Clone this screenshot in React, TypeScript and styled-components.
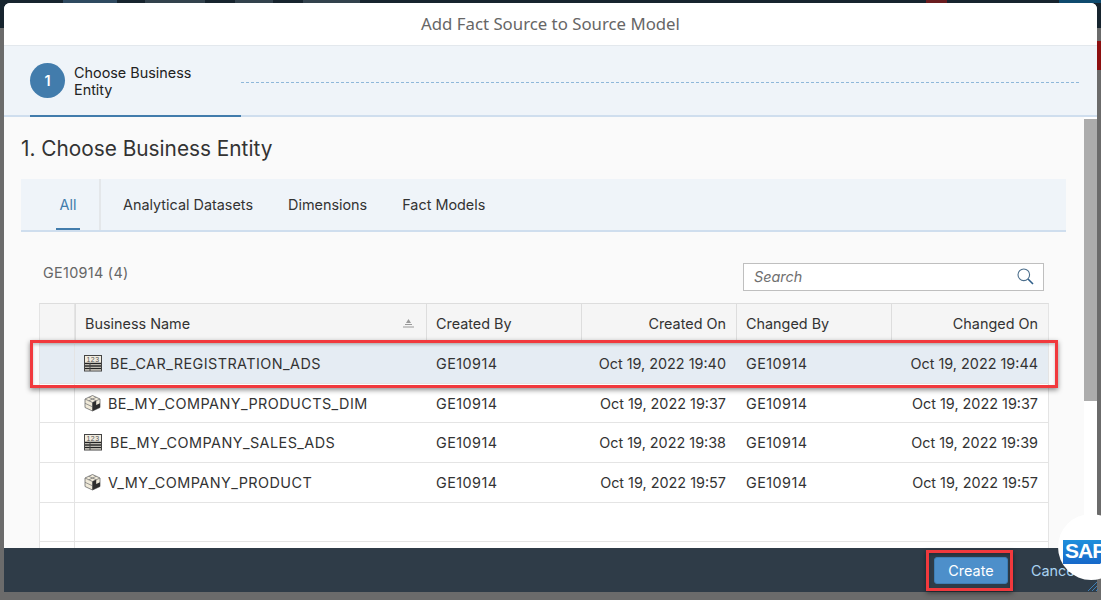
import styled, { createGlobalStyle } from 'styled-components';

const GlobalStyle = createGlobalStyle`
    html, body {
        margin: 0;
        padding: 0;
        height: 100%;
        overflow: hidden;
        font-family: Inter, "Noto Sans", sans-serif;
    }
`;

const Page = styled.div`
    position: relative;
    width: 1101px;
    height: 600px;
    overflow: hidden;
    background: #6b6b6b;
`;

const ShellBar = styled.div`
    height: 28px;
    display: flex;
    background: #17242e;
`;

const ShellMark = styled.div<{ $left: number; $width: number; $color: string }>`
    width: ${(p) => p.$width}px;
    height: 3px;
    margin-left: ${(p) => p.$left}px;
    background: ${(p) => p.$color};
`;

const RedFlag = styled.div`
    position: absolute;
    right: 0;
    top: 41px;
    width: 4px;
    height: 29px;
    background: #8c0f10;
`;

const Dialog = styled.div`
    position: absolute;
    left: 4px;
    top: 3px;
    width: 1093px;
    height: 589px;
    display: flex;
    flex-direction: column;
    background: #fafafa;
    border-radius: 6px 6px 0 0;
    overflow: hidden;
`;

const DialogTitle = styled.div`
    height: 43px;
    flex: none;
    background: #fff;
    color: #666;
    font-family: "Noto Sans", sans-serif;
    font-size: 16.8px;
    line-height: 42px;
    text-align: center;
    border-bottom: 1px solid #e3e8ed;
    box-sizing: border-box;
`;

const Wizard = styled.div`
    height: 71px;
    flex: none;
    box-sizing: border-box;
    display: flex;
    padding-left: 26px;
    background: #eff4f9;
    border-bottom: 2px solid #cfdeee;
`;

const WizardStep = styled.div`
    width: 211px;
    height: 71px;
    flex: none;
    box-sizing: border-box;
    display: flex;
    align-items: center;
    gap: 9px;
    padding-bottom: 1px;
    border-bottom: 2px solid #427cac;
`;

const StepBadge = styled.div`
    width: 35px;
    height: 35px;
    flex: none;
    border-radius: 50%;
    background: #427cac;
    color: #fff;
    font-size: 14.4px;
    font-weight: 600;
    line-height: 35px;
    text-align: center;
`;

const StepLabel = styled.div`
    width: 130px;
    padding-top: 2px;
    color: #222;
    font-size: 14.4px;
    line-height: 17px;
`;

const StepLine = styled.div`
    width: 838px;
    height: 0;
    margin-top: 36px;
    border-top: 1px dashed #8fb8da;
`;

const Body = styled.div`
    flex: 1;
    min-height: 0;
    display: flex;
    overflow: hidden;
`;

const Content = styled.div`
    flex: 1;
    min-width: 0;
    padding: 0 18px 0 17px;
    overflow: hidden;
`;

const ScrollTrack = styled.div`
    width: 13px;
    flex: none;
    background: #fff;
`;

const ScrollThumb = styled.div`
    height: 282px;
    margin-top: 2px;
    background: #acacac;
`;

const Heading = styled.h2`
    margin: 0;
    padding-top: 18px;
    height: 62px;
    box-sizing: border-box;
    color: #333;
    font-size: 20.8px;
    font-weight: 400;
    line-height: 27px;
`;

const TabBar = styled.div`
    height: 53px;
    box-sizing: border-box;
    display: flex;
    padding-left: 35px;
    background: #eff4f9;
    border-bottom: 2px solid #cfdeee;
`;

const Tab = styled.div<{ $active?: boolean }>`
    height: 51px;
    box-sizing: border-box;
    color: ${(p) => (p.$active ? '#427cac' : '#333')};
    font-size: 14.4px;
    line-height: 52px;
    white-space: nowrap;
    text-align: center;
    width: ${(p) => (p.$active ? '24px' : 'auto')};
    margin-right: ${(p) => (p.$active ? '19px' : '35px')};
    ${(p) => p.$active && 'border-bottom: 2px solid #427cac;'}
`;

const TabDivider = styled.div`
    width: 2px;
    height: 51px;
    margin-right: 22px;
    background: #e4e7ea;
`;

const Toolbar = styled.div`
    height: 72px;
    display: flex;
    align-items: flex-start;
    justify-content: space-between;
    padding: 31px 22px 0 22px;
    box-sizing: border-box;
`;

const Owner = styled.div`
    color: #666;
    font-size: 14.4px;
    letter-spacing: 0.3px;
    line-height: 20px;
`;

const SearchBox = styled.div`
    width: 301px;
    height: 28px;
    box-sizing: border-box;
    display: flex;
    align-items: center;
    justify-content: space-between;
    padding: 0 9px 1px 10px;
    background: #fff;
    border: 1px solid #bfbfbf;
    color: #707070;
    font-size: 14.4px;
    font-style: italic;
`;

const Table = styled.div`
    box-sizing: border-box;
    margin: -1px 0 0 18px;
    width: 1010px;
    border-top: 1px solid #ddd;
    border-right: 1px solid #e4e4e4;
    border-left: 1px solid #e4e4e4;
`;

const Row = styled.div<{ $head?: boolean; $selected?: boolean }>`
    display: grid;
    grid-template-columns: 35px 351px 155px 155px 155px 1fr;
    height: ${(p) => (p.$head ? '40px' : '39.7px')};
    box-sizing: border-box;
    align-items: stretch;
    border-bottom: 1px solid #e4e4e4;
    color: #333;
    font-size: 14.4px;
    background: ${(p) => (p.$selected ? '#e5ecf3' : p.$head ? '#f5f5f5' : '#fff')};
`;

const Cell = styled.div<{ $right?: boolean; $head?: boolean; $caps?: boolean }>`
    display: flex;
    align-items: center;
    justify-content: ${(p) => (p.$right ? 'flex-end' : 'flex-start')};
    padding: 0 ${(p) => (p.$right ? '10px' : '0')} 0 ${(p) => (p.$head ? '9px' : '10px')};
    border-left: ${(p) => (p.$head ? '1px solid #ddd' : 'none')};
    letter-spacing: ${(p) => (p.$caps ? '0.45px' : '0')};
    white-space: nowrap;
    min-width: 0;
    overflow: hidden;
`;

const SelectorCell = styled.div`
    border-right: 1px solid #e4e4e4;
`;

const NameCell = styled(Cell)`
    gap: 7px;
    padding-left: 9px;
`;

const SortMark = styled.svg`
    margin-left: auto;
    margin-right: 11px;
`;

const Footer = styled.div`
    height: 44px;
    flex: none;
    box-sizing: border-box;
    display: flex;
    align-items: center;
    padding-left: 930px;
    background: #2f3c48;
`;

const PrimaryButton = styled.button`
    width: 74px;
    height: 27px;
    flex: none;
    border: 1px solid #3f7fb5;
    border-radius: 3px;
    background: #4d8fca;
    color: #fff;
    font-family: inherit;
    font-size: 14.4px;
    padding: 0;
`;

const GhostButton = styled.button`
    flex: none;
    margin-left: 23px;
    border: none;
    background: none;
    color: #a9d2f0;
    font-family: inherit;
    font-size: 14.4px;
    padding: 0;
`;

const Callout = styled.div`
    position: absolute;
    box-sizing: border-box;
    border: 3px solid #f1393d;
    box-shadow: 0 2px 5px rgba(0, 0, 0, 0.45), inset 0 2px 3px rgba(0, 0, 0, 0.2);
`;

const RowCallout = styled(Callout)`
    left: 30px;
    top: 340px;
    width: 1028px;
    height: 48px;
`;

const ButtonCallout = styled(Callout)`
    left: 926px;
    top: 550px;
    width: 87px;
    height: 41px;
`;

const LogoBubble = styled.div`
    position: absolute;
    left: 1058px;
    top: 514px;
    width: 66px;
    height: 66px;
    box-sizing: border-box;
    padding: 26px 0 0 5px;
    border-radius: 50%;
    background: #fff;
`;

const Grip = styled.svg`
    position: absolute;
    left: 1087px;
    top: 581px;
`;

const AdsIcon = () => (
    <svg width="19" height="17" viewBox="0 0 19 17" fill="none" style={{ flex: 'none' }}>
        <rect x="0.5" y="0.5" width="17" height="15.5" fill="#f1ece0" stroke="#444" />
        <text x="9" y="7" fontSize="7" fill="#555" textAnchor="middle" fontFamily="Liberation Sans">123</text>
        <path d="M1 8.5h16M1 11h16M1 13.5h16" stroke="#222" strokeWidth="1.3" />
        <path d="M6 8v8" stroke="#444" />
    </svg>
);

const CubeIcon = () => (
    <svg width="17" height="17" viewBox="0 0 17 17" style={{ flex: 'none' }}>
        <path d="M8.5 0.5 16 4v8.5L8.5 16 1 12.5V4z" fill="#efe9d8" stroke="#6b6b6b" strokeWidth="0.8" />
        <path d="M1 4l7.5 3.5L16 4M8.5 7.5V16M1 8.3l7.5 3.5M4.8 2.3l7.5 3.5M12.2 2.3 4.8 5.8" fill="none" stroke="#7c7c7c" strokeWidth="0.8" />
        <path d="M8.5 7.5 12.2 5.8V10L8.5 11.8zM12.2 10 16 8.2v4.3l-3.8 1.8zM8.5 11.8l3.7-1.8v4.3L8.5 16z" fill="#2e2e2e" />
    </svg>
);

const SearchIcon = () => (
    <svg width="17" height="17" viewBox="0 0 17 17" fill="none">
        <circle cx="6.8" cy="6.8" r="5.8" stroke="#4d6f8c" strokeWidth="1.1" />
        <path d="M11 11l5 5" stroke="#2f5f8a" strokeWidth="1.6" />
    </svg>
);

type Entity = {
    name: string;
    kind: 'ads' | 'cube';
    createdOn: string;
    changedOn: string;
};

const entities: Entity[] = [
    { name: 'BE_CAR_REGISTRATION_ADS', kind: 'ads', createdOn: 'Oct 19, 2022 19:40', changedOn: 'Oct 19, 2022 19:44' },
    { name: 'BE_MY_COMPANY_PRODUCTS_DIM', kind: 'cube', createdOn: 'Oct 19, 2022 19:37', changedOn: 'Oct 19, 2022 19:37' },
    { name: 'BE_MY_COMPANY_SALES_ADS', kind: 'ads', createdOn: 'Oct 19, 2022 19:38', changedOn: 'Oct 19, 2022 19:39' },
    { name: 'V_MY_COMPANY_PRODUCT', kind: 'cube', createdOn: 'Oct 19, 2022 19:57', changedOn: 'Oct 19, 2022 19:57' },
];

function App() {
    return (
        <Page>
            <GlobalStyle />
            <ShellBar>
                <ShellMark $left={63} $width={57} $color="#2f4a60" />
                <ShellMark $left={28} $width={62} $color="#33424d" />
                <ShellMark $left={30} $width={40} $color="#33424d" />
                <ShellMark $left={30} $width={60} $color="#33424d" />
                <ShellMark $left={566} $width={22} $color="#6a1c1f" />
                <ShellMark $left={112} $width={44} $color="#0e4a6e" />
            </ShellBar>
            <RedFlag />
            <Dialog>
                <DialogTitle>Add Fact Source to Source Model</DialogTitle>
                <Wizard>
                    <WizardStep>
                        <StepBadge>1</StepBadge>
                        <StepLabel>Choose Business Entity</StepLabel>
                    </WizardStep>
                    <StepLine />
                </Wizard>
                <Body>
                    <Content>
                        <Heading>1. Choose Business Entity</Heading>
                        <TabBar>
                            <Tab $active>All</Tab>
                            <TabDivider />
                            <Tab>Analytical Datasets</Tab>
                            <Tab>Dimensions</Tab>
                            <Tab>Fact Models</Tab>
                        </TabBar>
                        <Toolbar>
                            <Owner>GE10914 (4)</Owner>
                            <SearchBox>
                                Search
                                <SearchIcon />
                            </SearchBox>
                        </Toolbar>
                        <Table>
                            <Row $head>
                                <SelectorCell />
                                <Cell $head>
                                    Business Name
                                    <SortMark width="13" height="9" viewBox="0 0 13 9">
                                        <path d="M6.5 0 9 4H4zM3 5h7v1H3zM1 7.5h11v1H1z" fill="#9a9a9a" />
                                    </SortMark>
                                </Cell>
                                <Cell $head>Created By</Cell>
                                <Cell $head $right>Created On</Cell>
                                <Cell $head>Changed By</Cell>
                                <Cell $head $right>Changed On</Cell>
                            </Row>
                            {entities.map((entity, i) => (
                                <Row key={entity.name} $selected={i === 0}>
                                    <SelectorCell />
                                    <NameCell $caps>
                                        {entity.kind === 'ads' ? <AdsIcon /> : <CubeIcon />}
                                        {entity.name}
                                    </NameCell>
                                    <Cell $caps>GE10914</Cell>
                                    <Cell $right>{entity.createdOn}</Cell>
                                    <Cell $caps>GE10914</Cell>
                                    <Cell $right>{entity.changedOn}</Cell>
                                </Row>
                            ))}
                            <Row><SelectorCell /></Row>
                            <Row><SelectorCell /></Row>
                        </Table>
                    </Content>
                    <ScrollTrack>
                        <ScrollThumb />
                    </ScrollTrack>
                </Body>
                <Footer>
                    <PrimaryButton>Create</PrimaryButton>
                    <GhostButton>Cancel</GhostButton>
                </Footer>
            </Dialog>
            <RowCallout />
            <ButtonCallout />
            <LogoBubble>
                <svg width="61" height="24" viewBox="0 0 61 24">
                    <defs>
                        <linearGradient id="sapBlue" x1="0" y1="0" x2="0" y2="1">
                            <stop offset="0" stopColor="#1f8fdc" />
                            <stop offset="1" stopColor="#1668c9" />
                        </linearGradient>
                    </defs>
                    <polygon points="0,0 61,0 37,24 0,24" fill="url(#sapBlue)" />
                    <text x="2" y="18" fontSize="21" fontWeight="700" letterSpacing="-1" fill="#fff" fontFamily="Liberation Sans">SAP</text>
                </svg>
            </LogoBubble>
            <Grip width="12" height="11" viewBox="0 0 12 11">
                <path d="M1 10l9-9M5 10l5-5M9 10l2-2" stroke="#3f7fb5" strokeWidth="1" />
            </Grip>
        </Page>
    );
}

export default App;
